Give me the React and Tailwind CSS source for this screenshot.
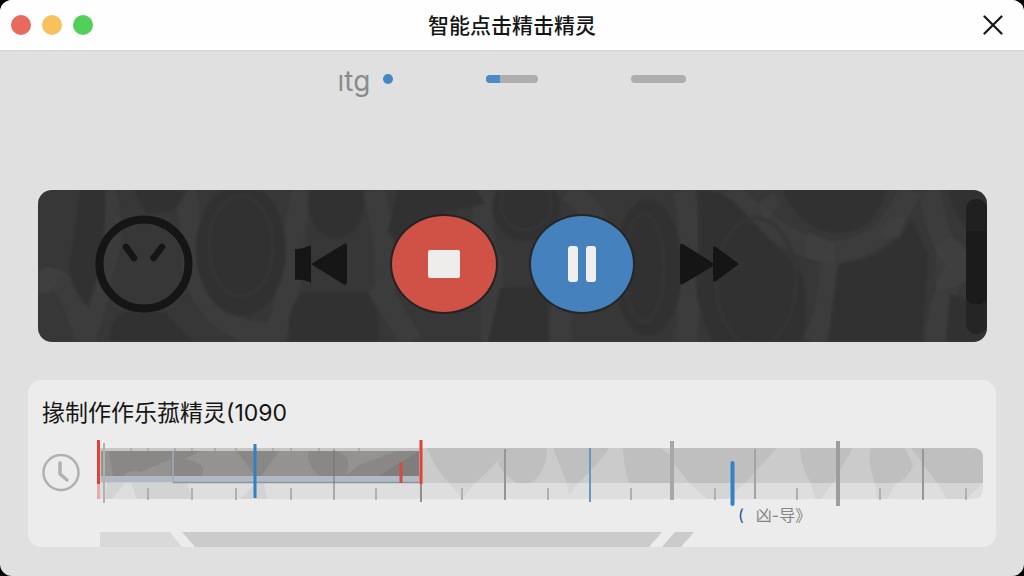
const lights = [
  { label: 'Close', className: 'bg-[#e8695d]' },
  { label: 'Minimize', className: 'bg-[#f7c15c]' },
  { label: 'Zoom', className: 'bg-[#50cf5b]' },
];

// x positions are in track units, 0 to 886
const minorTicks = [51, 95, 139, 194, 279, 365, 451, 534, 618, 700, 783, 869];
const topTicks = [34, 51, 78, 95, 118, 139, 176, 194, 222, 262];
const majorTicks = [
  { x: 7, y1: 4, y2: 64, w: 2, color: '#b1b1b1' },
  { x: 237, y1: 10, y2: 61, w: 1, color: '#757575' },
  { x: 324, y1: 40, y2: 63, w: 2, color: '#8e8e8e' },
  { x: 408, y1: 10, y2: 61, w: 2, color: '#959595' },
  { x: 575, y1: 2, y2: 61, w: 4, color: '#a9a6a6' },
  { x: 658, y1: 10, y2: 60, w: 2, color: '#a3a3a3' },
  { x: 741, y1: 2, y2: 67, w: 4, color: '#9d9d9d' },
  { x: 826, y1: 10, y2: 61, w: 2, color: '#979797' },
];

const TitleBar = () => (
  <header className="flex h-[51px] items-center border-b border-[#d4d4d4] bg-[#fefefe] px-[11px]">
    <div className="flex flex-1 items-center gap-[11px]">
      {lights.map(({ label, className }) => (
        <button key={label} type="button" aria-label={label} className={`size-5 rounded-full ${className}`} />
      ))}
    </div>
    <h1 className="pt-0.5 text-[21px] leading-6 font-medium text-[#161616]">智能点击精击精灵</h1>
    <div className="flex flex-1 justify-end">
      <button type="button" aria-label="Close window" className="mr-2 p-0.5">
        <svg viewBox="0 0 20 20" className="size-5" fill="none" stroke="#15151a" strokeWidth="2.2" strokeLinecap="round">
          <path d="M1.5 1.5 18.5 18.5M18.5 1.5 1.5 18.5" />
        </svg>
      </button>
    </div>
  </header>
);

const StatusRow = () => (
  <div className="flex h-14 items-center justify-center gap-[93px]">
    <div className="flex items-center gap-[13px]">
      <span className="pt-1 text-[28px] leading-8 text-[#8b8b8b]">ıtg</span>
      <span className="size-[10px] rounded-full bg-[#4488c6]" />
    </div>
    <div className="h-2 w-[52px] overflow-hidden rounded-full bg-[#aeaeae]">
      <div className="h-full w-[14px] bg-[#4a8bc5]" />
    </div>
    <div className="h-2 w-[55px] rounded-full bg-[#aeaeae]" />
  </div>
);

const PanelTexture = () => (
  <svg
    viewBox="0 0 949 152"
    preserveAspectRatio="none"
    className="absolute inset-0 size-full opacity-75 blur-[1px]"
    aria-hidden="true"
  >
    <g fill="none" stroke="#424242" strokeWidth="22" opacity="0.65">
      <path d="M66 0Q80 42 64 82Q60 120 44 152" />
      <path d="M0 92Q24 78 38 120T48 152" />
      <path d="M148 0Q154 44 156 86Q180 150 238 142Q256 96 256 42L264 0" />
      <path d="M336 0Q356 90 344 104L374 152" />
      <path d="M450 0Q438 48 454 70V152" />
      <path d="M530 0Q572 28 566 74Q514 100 524 152" />
      <path d="M645 0Q658 50 648 152" />
      <path d="M690 0Q756 64 798 62Q850 56 872 0" />
      <path d="M792 58Q794 112 776 152" />
      <path d="M892 0Q900 64 926 72Q900 102 898 152" />
    </g>
    <g fill="#303030">
      <path d="M42 0H67Q70 62 50 118Q24 88 34 62Z" />
      <ellipse cx="203" cy="60" rx="45" ry="66" />
      <ellipse cx="298" cy="12" rx="28" ry="36" />
      <path d="M96 0H148Q140 28 108 22Z" />
      <path d="M72 152Q72 120 96 120L128 123L153 152Z" />
      <path d="M252 152Q246 118 266 102H330Q344 126 340 152Z" />
      <ellipse cx="488" cy="18" rx="34" ry="33" />
      <ellipse cx="610" cy="78" rx="34" ry="68" />
      <path d="M462 98L510 96V152H450Z" />
      <path d="M660 0Q690 2 702 18L752 70Q776 88 764 152H676Q652 116 660 58Z" />
      <path d="M744 0H848Q838 42 798 43Q764 40 744 0Z" />
      <path d="M800 74Q850 70 874 30L890 66L884 152H790Z" />
      <path d="M910 0H949V44H938Q918 34 910 0Z" />
      <path d="M912 104L949 118V152H908Z" />
      <path d="M360 0H438L448 14L405 22L370 66L350 42Z" />
    </g>
    <g fill="none" stroke="#353535" strokeWidth="4">
      <ellipse cx="203" cy="56" rx="32" ry="50" />
      <ellipse cx="488" cy="14" rx="25" ry="26" />
      <ellipse cx="606" cy="78" rx="20" ry="54" />
      <ellipse cx="718" cy="92" rx="40" ry="64" />
    </g>
    <g fill="#4a4a4a" opacity="0.45">
      <path d="M10 76L26 82L12 104H0V84Z" />
      <path d="M720 14L736 2L744 14L728 30Z" />
      <path d="M770 42L796 52V74L768 68Z" />
      <path d="M850 30L868 26L862 48L842 46Z" />
      <path d="M898 56L912 46L928 56V92L898 102Z" />
    </g>
  </svg>
);

const ControlPanel = () => (
  <section className="relative mr-[37px] ml-[38px] mt-[83px] flex h-[152px] items-center overflow-hidden rounded-[14px] bg-[#373737] pb-1 pl-[57px]">
    <PanelTexture />
    <svg viewBox="0 0 98 98" className="relative size-[98px] shrink-0" fill="none" stroke="#151515">
      <circle cx="49" cy="49" r="44.500" strokeWidth="8" />
      <path d="M31 32 39 43M67 32 58.500 43" strokeWidth="6.500" strokeLinecap="round" />
    </svg>
    <div className="relative ml-[102px] flex items-center">
      <button type="button" aria-label="Previous">
        <svg viewBox="0 0 52 44" className="h-11 w-[52px]" fill="#161616">
          <path d="M0 7Q8 7 16 3V41Q9 37 0 38ZM16 22 49 2Q52 0 52 4V41Q51 44 48 42Z" />
        </svg>
      </button>
      <button
        type="button"
        aria-label="Stop"
        className="ml-[43px] flex h-[100px] w-[108px] items-center justify-center rounded-[50%] border-2 border-[#232323] bg-[#d05145]"
      >
        <span className="h-7 w-8 rounded-xs bg-[#efecec]" />
      </button>
      <button
        type="button"
        aria-label="Pause"
        className="ml-[31px] flex h-[100px] w-[106px] items-center justify-center gap-2 rounded-[50%] border-2 border-[#262626] bg-[#4582bd]"
      >
        <span className="h-9 w-[10px] rounded-[3px] bg-[#f1eeee]" />
        <span className="h-9 w-[10px] rounded-[3px] bg-[#f1eeee]" />
      </button>
      <button type="button" aria-label="Fast forward" className="ml-11">
        <svg viewBox="0 0 60 44" className="h-11 w-[60px]" fill="#151515">
          <path d="M1 3Q1 1 4 2L34 21V6Q34 3 37 5L60 22 37 39Q34 41 34 38V24L4 42Q1 43 1 41Z" />
        </svg>
      </button>
    </div>
    <div className="absolute top-[9px] right-0 h-[135px] w-[21px] overflow-hidden rounded-[10px] bg-[#252525]">
      <div className="h-[105px] w-full rounded-b-lg border-t-[32px] border-[#202020] bg-[#1b1b1b]" />
    </div>
  </section>
);

const Clock = () => (
  <svg viewBox="0 0 38 38" className="size-[38px] shrink-0" fill="none" stroke="#b1b1b1" strokeLinecap="round">
    <circle cx="19" cy="18.500" r="17.500" strokeWidth="2.500" />
    <path d="M18 9V20L25 26" strokeWidth="3.500" strokeLinejoin="round" />
  </svg>
);

const Timeline = () => (
  <svg viewBox="0 0 886 68" preserveAspectRatio="none" className="h-[68px] min-w-0 flex-1">
    <defs>
      <clipPath id="track">
        <path d="M0 9H876Q886 9 886 19V50Q886 60 876 60H0Z" />
      </clipPath>
    </defs>
    <g clipPath="url(#track)">
      <rect y="9" width="886" height="35" fill="#cbcbcb" />
      <rect y="44" width="886" height="17" fill="#dedede" />
      <g fill="#bfbfbf">
        <path d="M330 9H408Q406 20 378 44H352Q338 30 330 9Z" />
        <path d="M408 9H450Q450 32 434 44H420Q406 35 401 24Z" />
        <path d="M456 9H512Q506 20 481 44H470Z" />
        <path d="M526 9H564L575 18V44H532Q527 30 526 9Z" />
        <path d="M575 9H680L648 44H592L575 22Z" />
        <path d="M703 9H756L736 44H714Q704 30 703 9Z" />
        <path d="M774 9H808L816 26Q812 38 800 44H778Q770 24 774 9Z" />
        <path d="M814 9H886V44H840Z" />
      </g>
      <g fill="#d5d5d5">
        <path d="M352 44H378L365 60Z" />
        <path d="M470 44H481L472 56Z" />
        <path d="M592 44H648L630 60H610Z" />
        <path d="M714 44H736L724 60H718Z" />
        <path d="M778 44H800L790 60H780Z" />
        <path d="M840 44H886L870 60H850Z" />
      </g>
      <g fill="#d3d3d3">
        <path d="M10 44H28L15 60H8Z" />
        <path d="M34 44H90L96 60H40Z" />
        <path d="M142 60Q158 50 164 30L170 60Z" />
      </g>
      <rect y="9" width="322" height="3" fill="#c6c6c6" />
    </g>
    {/* recorded section */}
    <rect x="4" y="12" width="318" height="25" fill="#898887" />
    <g fill="#949392">
      <path d="M4 12H12L16 37H4Z" />
      <path d="M26 37Q32 30 44 33L74 20V37Z" />
      <path d="M104 12H140L158 37H104Q112 24 88 20Z" />
      <path d="M164 37 182 12H212Q208 24 222 37Z" />
      <path d="M248 37Q258 18 240 12H300L262 26Z" />
    </g>
    <path d="M282 37 322 12V37Z" fill="#7f7e7d" />
    <rect x="4" y="37" width="318" height="6" fill="#b1bac2" />
    <path d="M76 11V43" stroke="#a3acb4" strokeWidth="1.500" />
    <path d="M76 43.500H322" stroke="#8796a3" strokeWidth="1.500" />
    {topTicks.map((x) => (
      <path key={x} d={`M${x} 9V12`} stroke="#959595" strokeWidth="1" />
    ))}
    {minorTicks.map((x) => (
      <path key={x} d={`M${x} 49V61`} stroke="#b0b0b0" strokeWidth="2" />
    ))}
    {majorTicks.map(({ x, y1, y2, w, color }) => (
      <path key={x} d={`M${x} ${y1}V${y2}`} stroke={color} strokeWidth={w} />
    ))}
    <path d="M1.500 44V60" stroke="#eaa9a5" strokeWidth="3" />
    <path d="M1.500 1V45" stroke="#e4403a" strokeWidth="3" />
    <path d="M304 23V44" stroke="#db4a40" strokeWidth="3" />
    <path d="M324 1V45" stroke="#e34036" strokeWidth="3" />
    <path d="M158 5V59" stroke="#347fc4" strokeWidth="3" />
    <path d="M493 9V63" stroke="#6297c6" strokeWidth="2" />
    <path d="M635.500 24V65" stroke="#3380cb" strokeWidth="4" strokeLinecap="round" />
  </svg>
);

const RecordCard = () => (
  <section className="mx-7 mt-[38px] overflow-hidden rounded-[14px] bg-[#ececec]">
    <h2 className="px-[14px] pt-[17px] text-[23px] leading-8 text-[#151515]">掾制作作乐菰精灵(1090</h2>
    <div className="mt-[10px] flex items-center gap-[17px] pr-[13px] pl-[14px]">
      <Clock />
      <Timeline />
    </div>
    <div className="-mt-[2px] flex h-5 items-center gap-3 pl-[710px] text-[16px] leading-5">
      <span className="text-[#2c5487]">(</span>
      <span className="text-[#858585]">凶-导》</span>
    </div>
    <svg viewBox="0 0 968 15" preserveAspectRatio="none" className="mt-[7px] h-[15px] w-full" aria-hidden="true">
      <path d="M72 0H142L154 15H72Z" fill="#d9d9d9" />
      <path d="M154 0H634L621 15H167Z" fill="#cbcbcb" />
      <path d="M647 0H666L653 15H634Z" fill="#cbcbcb" />
    </svg>
  </section>
);

const App = () => (
  <div className="min-h-screen bg-black font-['Inter','Noto_Sans_CJK_SC',sans-serif]">
    <main className="min-h-screen overflow-hidden rounded-[12px] bg-[#e0e0e0]">
      <TitleBar />
      <StatusRow />
      <ControlPanel />
      <RecordCard />
    </main>
  </div>
);

export default App;
